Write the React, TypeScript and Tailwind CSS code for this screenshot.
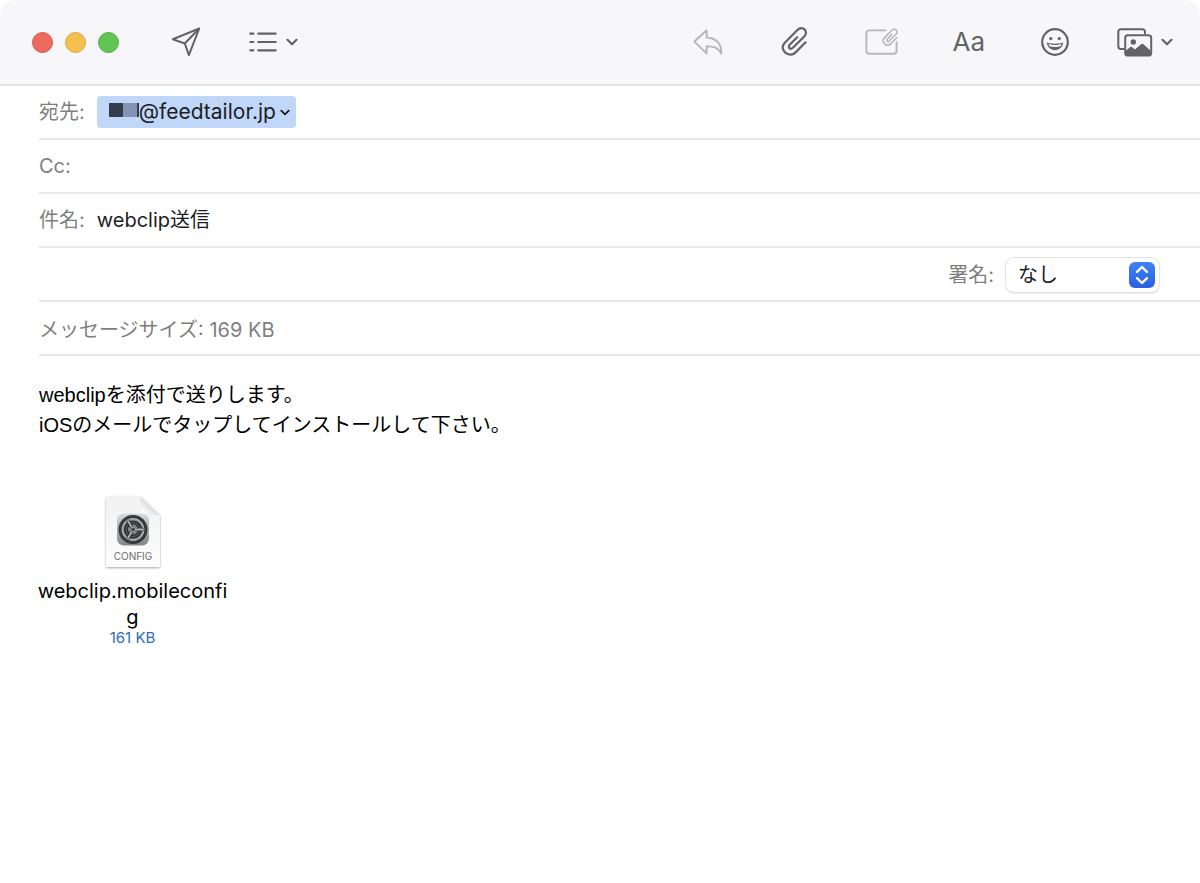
import React, { useState } from 'react';

const UI_FONT = "font-['Inter','Noto_Sans_CJK_JP',sans-serif]";
const BODY_FONT = "font-['Liberation_Sans','Noto_Sans_CJK_JP',sans-serif]";

const ChevronDown: React.FC<{ className?: string }> = ({ className }) => (
  <svg
    viewBox="0 0 12 8"
    className={className}
    fill="none"
    stroke="currentColor"
    strokeWidth="2.2"
    strokeLinecap="round"
    strokeLinejoin="round"
  >
    <path d="M1.5 1.8 6 6.2l4.5-4.4" />
  </svg>
);

const SendIcon = () => (
  <svg viewBox="0 0 30 30" className="size-[30px]" fill="none" stroke="currentColor" strokeWidth="2" strokeLinejoin="round">
    <path d="M28.2 1.5 1.8 12.2l12 4.3 4.1 11.7z" />
    <path d="M13.8 16.5 28.2 1.5" />
  </svg>
);

const ListIcon = () => (
  <svg viewBox="0 0 28 20" className="h-5 w-7" stroke="currentColor" strokeWidth="2.2" strokeLinecap="round">
    <path d="M1.3 1.7h3M1.3 10h3M1.3 18.3h3M9.3 1.7h17.4M9.3 10h17.4M9.3 18.3h17.4" />
  </svg>
);

const ReplyIcon = () => (
  <svg viewBox="0 0 30 26" className="h-[26px] w-[30px]" fill="none" stroke="currentColor" strokeWidth="2" strokeLinejoin="round">
    <path d="M13.6 1.3 1.4 12.6l12.2 11.8v-7.2c7.2 0 11.4 1.5 14.6 7.2.6-9.7-5.3-15.7-14.6-16z" />
  </svg>
);

// shared by the attach button and the small clip on the note
const CLIP_PATH =
  'M24.6 15.3 14.3 25.6C8.3 31.6-2.7 22.8 3.6 16L16.4 3C21.5-2.2 28 4.4 23.2 9.5L11.9 20.8C9.5 23.2 6.3 20.3 8.7 17.8L16.2 10.2';

const PaperclipIcon = () => (
  <svg viewBox="0 0 28 30" className="h-[30px] w-7" fill="none" stroke="currentColor" strokeWidth="2.2" strokeLinecap="round">
    <path d={CLIP_PATH} />
  </svg>
);

const NoteClipIcon = () => (
  <svg viewBox="0 0 34 28" className="h-7 w-[34px]" fill="none" stroke="currentColor" strokeWidth="1.9" strokeLinecap="round">
    <path d="M20.5 2.4H4.2c-1.900 0-2.800 1-2.800 2.700v18c0 1.700.9 2.700 2.800 2.700h24.600c1.900 0 2.800-1 2.800-2.700v-9" />
    <path d={CLIP_PATH} strokeWidth="2.600" transform="translate(17 0.500) scale(0.600)" />
  </svg>
);

const SmileIcon = () => (
  <svg viewBox="0 0 28 28" className="size-7" fill="none" stroke="currentColor" strokeWidth="2.2">
    <circle cx="14" cy="14" r="12.8" />
    <circle cx="9.800" cy="10.6" r="1.6" fill="currentColor" stroke="none" />
    <circle cx="18.200" cy="10.6" r="1.6" fill="currentColor" stroke="none" />
    <path d="M5.800 14.600c2.400.8 5 1.200 8.200 1.200s5.800-.4 8.200-1.200c-.4 4.200-3.800 7.600-8.200 7.600s-7.800-3.400-8.200-7.600z" fill="currentColor" stroke="none" />
    <path d="M7.500 16c3.800 1.200 9.200 1.200 13 0l-1 2.200c-2.800.9-8.200.9-11 0z" fill="#f7f7fa" stroke="none" />
  </svg>
);

const PhotosIcon = () => (
  <svg viewBox="0 0 36 29" className="h-[29px] w-9" fill="none" stroke="currentColor" strokeWidth="2" strokeLinejoin="round">
    <path d="M28 6V4c0-1.700-1-2.700-2.700-2.700H4C2.300 1.300 1.300 2.300 1.300 4v14.200c0 1.700 1 2.700 2.700 2.700h3.500" />
    <rect x="8.2" y="7.3" width="26" height="20.3" rx="2.7" />
    <circle cx="16.3" cy="14" r="2.7" fill="currentColor" stroke="none" />
    <path
      d="M9 22.500l4-3.300c.8-.7 1.500-.7 2.300 0l2.600 2.200 5.900-5c1-.9 1.900-.9 2.900 0l6.800 6.100V26c0 .8-.6 1.400-1.400 1.400H10.400c-.8 0-1.400-.6-1.400-1.400z"
      fill="currentColor"
      stroke="none"
    />
  </svg>
);

const ConfigFileIcon = () => (
  <svg viewBox="0 0 58 76" className="h-[76px] w-[58px]">
    <defs>
      <linearGradient id="paper" x1="0" y1="0" x2="0" y2="1">
        <stop offset="0" stopColor="#f1f1f1" />
        <stop offset="1" stopColor="#fdfdfd" />
      </linearGradient>
      <linearGradient id="fold" x1="0" y1="1" x2="1" y2="0">
        <stop offset="0.1" stopColor="#ffffff" />
        <stop offset="0.5" stopColor="#dedede" />
      </linearGradient>
      <linearGradient id="tile" x1="0" y1="0" x2="0" y2="1">
        <stop offset="0" stopColor="#d3dcde" />
        <stop offset="1" stopColor="#858585" />
      </linearGradient>
      <filter id="shade" x="-10%" y="-10%" width="120%" height="120%">
        <feDropShadow dx="0" dy="1" stdDeviation="0.9" floodOpacity="0.35" />
      </filter>
    </defs>
    <path d="M2 4c0-1.100.6-1.700 1.700-1.700H37L56 21v50.500c0 1-.6 1.500-1.600 1.500H3.600c-1 0-1.600-.5-1.600-1.500z" fill="url(#paper)" filter="url(#shade)" />
    <path d="M36.500 2.300V18.600c0 1.600.9 2.500 2.500 2.500H56z" fill="url(#fold)" />
    <rect x="13" y="19.500" width="32" height="32" rx="7" fill="url(#tile)" />
    <circle cx="29" cy="35.500" r="14.5" fill="#2e3134" />
    <circle cx="29" cy="35.500" r="10.8" fill="#8b8f91" stroke="#b4b7b8" strokeWidth="1.2" />
    <circle cx="29" cy="35.500" r="13" fill="none" stroke="#63676a" strokeWidth="0.8" strokeDasharray="1 1.2" />
    <circle cx="29" cy="35.500" r="7" fill="none" stroke="#2e3134" strokeWidth="4.2" />
    <circle cx="29" cy="35.500" r="7" fill="none" stroke="#686c6e" strokeWidth="0.8" />
    <path d="M29 35.500h10.800M29 35.500l-5.400-9.300M29 35.500l-5.400 9.300" stroke="#2e3134" strokeWidth="3.6" />
    <path d="M29 35.500h10.800M29 35.500l-5.400-9.300M29 35.500l-5.400 9.300" stroke="#b0b3b5" strokeWidth="1.8" />
    <circle cx="29" cy="35.500" r="2.2" fill="#3a3d40" stroke="#a5a8aa" strokeWidth="1" />
    <text x="29" y="66" textAnchor="middle" fontSize="10" fontFamily="Inter, sans-serif" fill="#6e6e6e">
      CONFIG
    </text>
  </svg>
);

const Toolbar = () => (
  <header className="flex h-[86px] items-center justify-between rounded-t-2xl border-b-2 border-[#e3e3e5] bg-[#f7f7fa] pr-[27px] pl-8 text-[#636366]">
    <div className="flex items-center">
      <div className="flex gap-3">
        <button aria-label="閉じる" className="size-[21px] rounded-full border border-[#d9564c] bg-[#ec6a5e]" />
        <button aria-label="しまう" className="size-[21px] rounded-full border border-[#dea73f] bg-[#f4bf4f]" />
        <button aria-label="拡大" className="size-[21px] rounded-full border border-[#4fae43] bg-[#61c554]" />
      </div>
      <button aria-label="送信" className="ml-[52px]"><SendIcon /></button>
      <button aria-label="ヘッダ" className="ml-12 flex items-center gap-[9px]">
        <ListIcon />
        <ChevronDown className="h-2 w-3" />
      </button>
    </div>
    <div className="flex items-center">
      <button aria-label="返信" disabled className="text-[#b7b7b9]"><ReplyIcon /></button>
      <button aria-label="添付" className="ml-[58px]"><PaperclipIcon /></button>
      <button aria-label="添付を含める" disabled className="ml-14 text-[#b7b7b9]"><NoteClipIcon /></button>
      <button aria-label="フォーマット" className={`ml-[53px] text-[26px] leading-8 ${UI_FONT}`}>Aa</button>
      <button aria-label="絵文字" className="ml-14"><SmileIcon /></button>
      <button aria-label="写真" className="ml-12 flex items-center gap-2">
        <PhotosIcon />
        <ChevronDown className="h-2 w-3" />
      </button>
    </div>
  </header>
);

const ROW = 'flex h-[54px] items-center border-b-2 border-[#e9e9e9] text-xl';
const LABEL = 'shrink-0 text-[#7f7f7f]';

const App: React.FC = () => {
  const [cc, setCc] = useState('');
  const [subject, setSubject] = useState('webclip送信');
  const [signature, setSignature] = useState('none');
  const [body, setBody] = useState(
    'webclipを添付で送りします。\niOSのメールでタップしてインストールして下さい。',
  );

  return (
    <div className={`min-h-screen bg-white text-[#1d1d1f] ${UI_FONT}`}>
      <Toolbar />

      <form className="pl-[39px]">
        <div className={ROW}>
          <span className={LABEL}>宛先:</span>
          <button type="button" className="ml-3 flex h-8 items-center rounded bg-[#c1d7fa] pr-[6px] pl-3 text-[21px]">
            <span className="flex self-start pt-[7px]">
              <span className="h-[14px] w-[14px] bg-[#353d4c]" />
              <span className="h-[14px] w-[14px] bg-[#8293b3]" />
              <span className="h-[14px] w-[2px] bg-[#353d4c]" />
            </span>
            @feedtailor.jp
            <ChevronDown className="ml-1 h-[7px] w-[10px]" />
          </button>
        </div>

        <div className={ROW}>
          <label htmlFor="cc" className={LABEL}>Cc:</label>
          <input
            id="cc"
            value={cc}
            onChange={(e) => setCc(e.target.value)}
            className="ml-3 min-w-0 flex-1 outline-none"
          />
        </div>

        <div className={ROW}>
          <label htmlFor="subject" className={LABEL}>件名:</label>
          <input
            id="subject"
            value={subject}
            onChange={(e) => setSubject(e.target.value)}
            className="ml-3 min-w-0 flex-1 outline-none"
          />
        </div>

        <div className={`${ROW} justify-end pt-0.5 pr-[41px]`}>
          <label htmlFor="signature" className={LABEL}>署名:</label>
          <div className="relative ml-3">
            <select
              id="signature"
              value={signature}
              onChange={(e) => setSignature(e.target.value)}
              className="h-[34px] w-[153px] appearance-none rounded-lg bg-white pl-3 text-xl leading-6 shadow-[0_0_0_1px_#e4e4e4,0_1px_2px_#00000040] outline-none"
            >
              <option value="none">なし</option>
            </select>
            <span className="pointer-events-none absolute top-1 right-1 flex size-[26px] items-center justify-center rounded-md bg-gradient-to-b from-[#3f82f3] to-[#2a60e0]">
              <svg viewBox="0 0 14 20" className="h-5 w-[14px]" fill="none" stroke="white" strokeWidth="2.4" strokeLinecap="round" strokeLinejoin="round">
                <path d="M2 6.800 7 2l5 4.800M2 13.200 7 18l5-4.800" />
              </svg>
            </span>
          </div>
        </div>

        <div className={`${ROW} ${LABEL} pt-1`}>メッセージサイズ: 169 KB</div>

        <textarea
          aria-label="本文"
          rows={2}
          value={body}
          onChange={(e) => setBody(e.target.value)}
          className={`mt-6 block w-full resize-none text-xl leading-[30px] text-black outline-none ${BODY_FONT}`}
        />
      </form>

      <figure className="mt-[54px] ml-[37px] flex w-[191px] flex-col items-center text-black">
        <ConfigFileIcon />
        <figcaption className="mt-2 text-center text-xl leading-[26px]">
          <span className="block break-all">webclip.mobileconfig</span>
          <span className="block text-[15px] leading-4 text-[#2f6bbd]">161 KB</span>
        </figcaption>
      </figure>
    </div>
  );
};

export default App;
